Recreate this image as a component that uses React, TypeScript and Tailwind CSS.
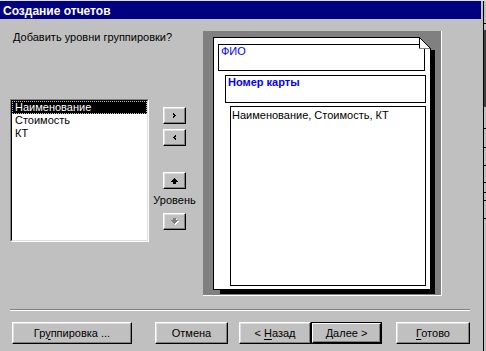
import React from "react";

type PixProps = { rows: string[]; color: string; shadow?: string };

// tiny pixel-art glyphs for the arrow buttons
function Pix({ rows, color, shadow }: PixProps) {
  const pts: [number, number][] = [];
  rows.forEach((r, y) =>
    r.split("").forEach((c, x) => {
      if (c === "#") pts.push([x, y]);
    })
  );
  const extra = shadow ? 1 : 0;
  return (
    <svg width={rows[0].length + extra} height={rows.length + extra} shapeRendering="crispEdges">
      {shadow &&
        pts.map(([x, y]) => <rect key={`s${x}-${y}`} x={x + 1} y={y + 1} width={1} height={1} fill={shadow} />)}
      {pts.map(([x, y]) => (
        <rect key={`p${x}-${y}`} x={x} y={y} width={1} height={1} fill={color} />
      ))}
    </svg>
  );
}

const raised =
  "flex items-center justify-center bg-[#c0c0c0] border border-t-white border-l-white border-r-black border-b-black shadow-[inset_-1px_-1px_0_#808080,inset_1px_1px_0_#dfdfdf]";

function SmallButton({ children }: { children: React.ReactNode }) {
  return <div className={`w-[23px] h-[17px] ${raised}`}>{children}</div>;
}

function DialogButton({
  width,
  className = "",
  children,
}: {
  width: string;
  className?: string;
  children: React.ReactNode;
}) {
  return <div className={`h-[22px] ${width} ${raised} ${className}`}>{children}</div>;
}

function Key({ children }: { children: React.ReactNode }) {
  return <span className="underline decoration-1 underline-offset-2">{children}</span>;
}

function ListBox() {
  const items = ["Наименование", "Стоимость", "КТ"];
  return (
    <div className="w-[139px] h-[143px] border border-t-[#808080] border-l-[#808080] border-r-white border-b-white">
      <div className="h-full bg-white border border-t-black border-l-black border-r-[#dfdfdf] border-b-[#dfdfdf]">
        {items.map((it, i) => (
          <div
            key={it}
            className={
              i === 0
                ? "h-[13px] pl-[3px] bg-black text-white outline-1 outline-dotted outline-[#c0c0c0] -outline-offset-1"
                : "h-[13px] pl-[3px]"
            }
          >
            {it}
          </div>
        ))}
      </div>
    </div>
  );
}

function DogEar() {
  const diag = Array.from({ length: 12 }, (_, i) => i);
  return (
    <svg
      className="absolute -top-[1px] -right-[1px]"
      width={12}
      height={13}
      shapeRendering="crispEdges"
    >
      <polygon points="0,0 12,0 12,13" fill="#808080" />
      <polygon points="0,0 0,12 12,12" fill="#ffffff" />
      <rect x={0} y={0} width={1} height={12} fill="#000" />
      <rect x={0} y={11} width={11} height={1} fill="#808080" />
      {diag.map((i) => (
        <rect key={i} x={i} y={i} width={1} height={1} fill="#000" />
      ))}
      <rect x={11} y={11} width={1} height={2} fill="#000" />
    </svg>
  );
}

function Preview() {
  return (
    <div className="w-[239px] h-[265px] bg-[#808080] border-r border-b border-white pl-[10px] pt-[6px]">
      <div className="relative w-[218px] h-[253px] bg-white border border-black flex flex-col">
        {/* page shadow */}
        <div className="absolute top-[12px] -right-[5px] -bottom-[5px] w-[4px] bg-black" />
        <div className="absolute left-[6px] -right-[5px] -bottom-[5px] h-[4px] bg-black" />
        <DogEar />
        <div className="ml-[4px] mt-[6px] w-[207px] h-[27px] border border-black pl-[2px] text-[#0000ff]">
          ФИО
        </div>
        <div className="ml-[11px] mt-[4px] w-[201px] h-[28px] border border-black pl-[2px] text-[#0000ff] font-bold">
          Номер карты
        </div>
        <div className="ml-[16px] mt-[3px] w-[196px] h-[180px] border border-black pl-[1px] pt-[2px]">
          Наименование, Стоимость, КТ
        </div>
      </div>
    </div>
  );
}

function RightEdge() {
  const ticks = [128, 147, 165, 182, 192, 200, 218];
  return (
    <svg width={5} height={351} shapeRendering="crispEdges">
      <rect x={0} y={0} width={5} height={1} fill="#dfdfdf" />
      <rect x={2} y={1} width={1} height={350} fill="#000" />
      <rect x={3} y={30} width={2} height={77} fill="#404040" />
      <rect x={3} y={23} width={2} height={1} fill="#000" />
      {ticks.map((t) => (
        <rect key={t} x={3} y={t} width={2} height={1} fill="#000" />
      ))}
    </svg>
  );
}

export default function App() {
  return (
    <div className="w-[486px] h-[351px] bg-[#c0c0c0] flex overflow-hidden font-['Liberation_Sans',Arial,sans-serif] text-[11px] leading-[13px] text-black">
      <div className="w-[481px] flex flex-col border-t border-t-[#dfdfdf]">
        {/* title bar */}
        <div className="h-[18px] bg-[#000080] text-white font-bold text-[12px] leading-[14px] pl-[3px] pt-[3px]">
          Создание отчетов
        </div>

        <div className="flex pl-[10px] pt-[12px]">
          <div className="w-[193px] flex flex-col">
            <div className="pl-[3px]">Добавить уровни группировки?</div>
            <div className="flex mt-[55px]">
              <ListBox />
              <div className="w-[23px] ml-[14px] mt-[8px] flex flex-col items-center">
                <SmallButton>
                  <Pix color="#000" rows={["#..", "##.", ".##", "##.", "#.."]} />
                </SmallButton>
                <div className="mt-[5px]">
                  <SmallButton>
                    <Pix color="#000" rows={["..#", ".##", "##.", ".##", "..#"]} />
                  </SmallButton>
                </div>
                <div className="mt-[26px]">
                  <SmallButton>
                    <Pix
                      color="#000"
                      rows={["...#...", "..###..", ".#####.", "#######", "..###..", "..###.."]}
                    />
                  </SmallButton>
                </div>
                <div className="mt-[5px] whitespace-nowrap">Уровень</div>
                <div className="mt-[6px]">
                  <SmallButton>
                    <Pix
                      color="#808080"
                      shadow="#ffffff"
                      rows={["..###..", "..###..", "#######", ".#####.", "..###..", "...#..."]}
                    />
                  </SmallButton>
                </div>
              </div>
            </div>
          </div>
          <Preview />
        </div>

        {/* separator */}
        <div className="ml-[10px] mt-[13px] w-[460px] h-[2px] border-t border-t-[#808080] border-b border-b-white" />

        {/* buttons */}
        <div className="flex mt-[11px]">
          <DialogButton width="w-[120px]" className="ml-[12px]">
            <span>
              Гр<Key>у</Key>ппировка ...
            </span>
          </DialogButton>
          <DialogButton width="w-[73px]" className="ml-[23px]">
            Отмена
          </DialogButton>
          <DialogButton width="w-[72px]" className="ml-[11px]">
            <span>
              &lt; <Key>Н</Key>азад
            </span>
          </DialogButton>
          <div className="w-[71px] h-[22px] border border-black">
            <div className="h-full flex items-center justify-center border border-t-white border-l-white border-r-black border-b-black shadow-[inset_-1px_-1px_0_#808080]">
              <span>
                <Key>Д</Key>алее &gt;
              </span>
            </div>
          </div>
          <DialogButton width="w-[74px]" className="ml-[14px]">
            <span>
              <Key>Г</Key>отово
            </span>
          </DialogButton>
        </div>
      </div>
      <RightEdge />
    </div>
  );
}
